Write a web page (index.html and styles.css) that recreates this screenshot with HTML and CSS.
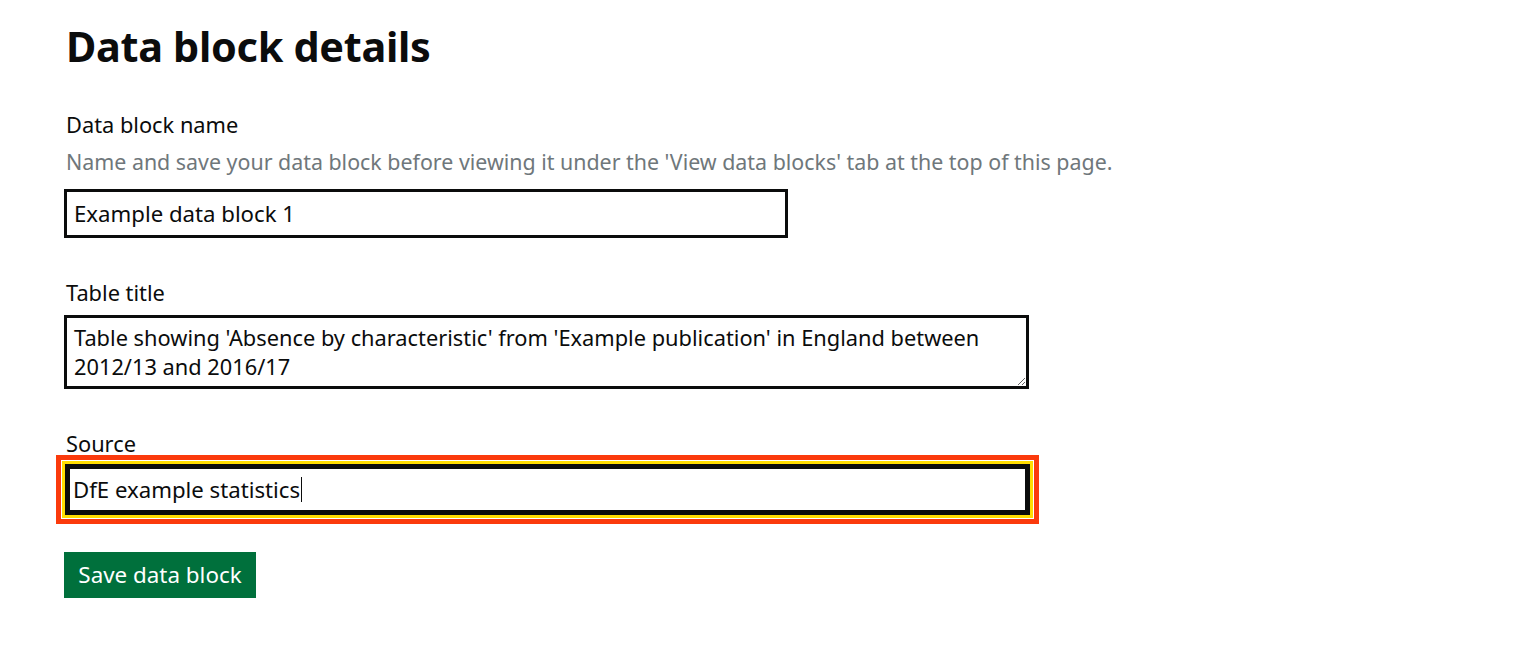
FILE: index.html
```html
<!DOCTYPE html>
<html lang="en">
<head>
<meta charset="utf-8">
<title>Data block details</title>
<link rel="stylesheet" href="styles.css">
</head>
<body>
<main class="page">
  <h1 class="heading">Data block details</h1>
  <form class="form">
    <div class="form-group">
      <label class="label" for="name">Data block name</label>
      <div class="hint">Name and save your data block before viewing it under the 'View data blocks' tab at the top of this page.</div>
      <input class="input input-name" id="name" type="text" value="Example data block 1">
    </div>
    <div class="form-group">
      <label class="label" for="title">Table title</label>
      <textarea class="textarea" id="title" rows="2">Table showing 'Absence by characteristic' from 'Example publication' in England between 2012/13 and 2016/17</textarea>
    </div>
    <div class="form-group form-group-source">
      <label class="label label-source" for="source">Source</label>
      <div class="focus-wrap">
        <input class="input input-focus" id="source" type="text" value="DfE example statistics">
        <span class="caret"></span>
      </div>
    </div>
    <button class="button" type="button">Save data block</button>
  </form>
</main>
</body>
</html>
```
FILE: styles.css
```css
html, body {
  margin: 0;
  padding: 0;
  background: #ffffff;
}
body {
  font-family: "Noto Sans", "Open Sans", sans-serif;
  color: #0b0c0c;
}
.page {
  padding: 22px 0 0 64px;
}
.heading {
  margin: 0 0 40px 2px;
  font-size: 41.4px;
  line-height: 48px;
  font-weight: 700;
  letter-spacing: -0.3px;
}
.form {
  display: flex;
  flex-direction: column;
  align-items: flex-start;
}
.form-group {
  display: flex;
  flex-direction: column;
  align-items: flex-start;
  margin-bottom: 40px;
}
.form-group-source {
  margin-bottom: 37px;
}
.label {
  font-size: 21.8px;
  line-height: 30px;
  margin: 0 0 7px 2px;
}
.label-source {
  margin-bottom: 5px;
}
.hint {
  font-size: 21.4px;
  line-height: 30px;
  color: #6f777b;
  margin: 0 0 12px 2px;
}
.input, .textarea {
  box-sizing: border-box;
  font-family: inherit;
  font-size: 22.2px;
  color: #0b0c0c;
  border: 3px solid #0b0c0c;
  border-radius: 0;
  background: #fff;
  padding: 0 7px;
  margin: 0;
  outline: none;
}
.input-name {
  width: 724px;
  height: 49px;
}
.textarea {
  width: 965px;
  height: 74px;
  padding: 5px 7px;
  font-size: 21.8px;
  line-height: 29px;
  resize: vertical;
}
.focus-wrap {
  position: relative;
  margin-left: 1px;
}
.input-focus {
  width: 965px;
  height: 51px;
  border-width: 3px;
  box-shadow: inset 0 0 0 2px #0b0c0c, 0 0 0 3px #ffdd00, 0 0 0 4px #ffffff, 0 0 0 9px #fb3a0c;
  padding: 0 5px;
}
.caret {
  position: absolute;
  left: 236px;
  top: 13px;
  width: 1px;
  height: 25px;
  background: #0b0c0c;
}
.button {
  font-family: inherit;
  font-size: 22.4px;
  line-height: 24px;
  color: #ffffff;
  background: #00703c;
  border: 0;
  border-radius: 0;
  box-shadow: 0 3px 0 #002d18;
  width: 192px;
  height: 46px;
  padding: 0;
  margin: 0;
  cursor: pointer;
}
```
